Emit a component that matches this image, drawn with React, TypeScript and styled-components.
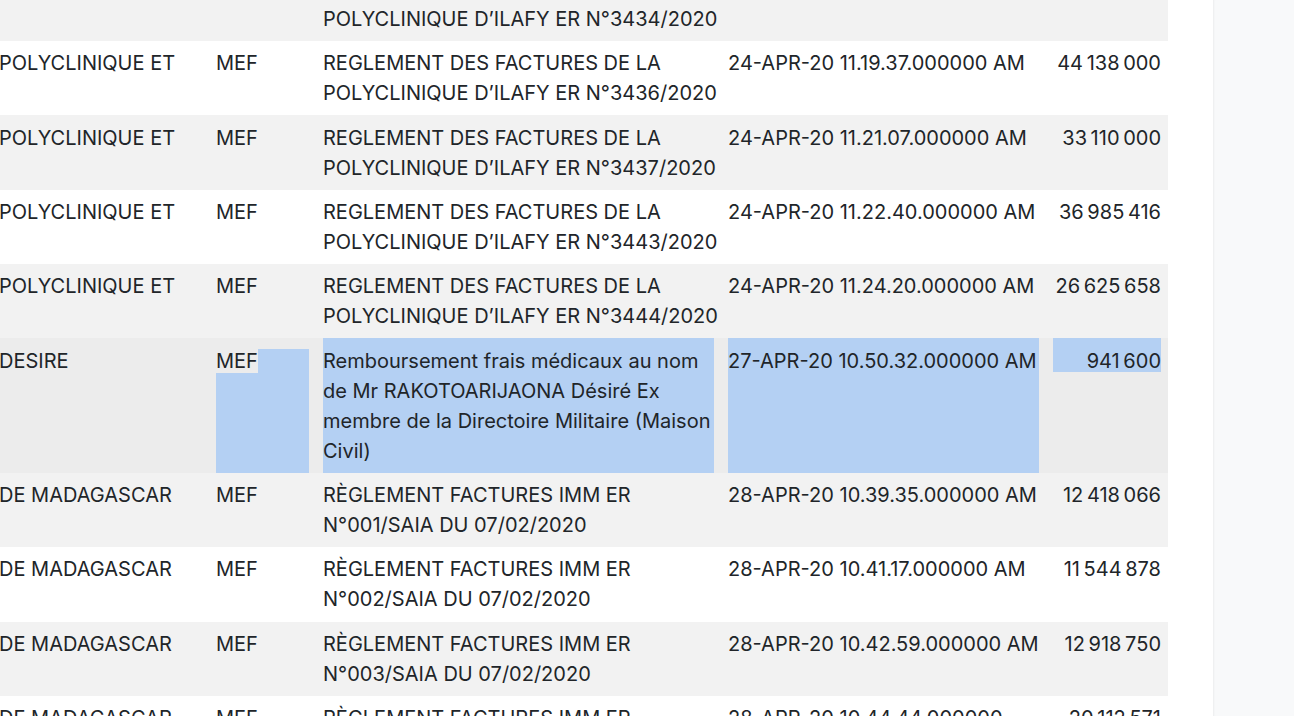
import React from 'react';
import styled, { createGlobalStyle, css } from 'styled-components';

const SEL = '#b4d0f3';

const GlobalStyle = createGlobalStyle`
  html, body { margin: 0; padding: 0; background: #fff; }
  body {
    font-family: Inter, "Noto Sans", "Liberation Sans", sans-serif;
    color: #212529;
    overflow: hidden;
  }
`;

const Page = styled.div`
  display: flex;
  height: 716px;
  overflow: hidden;
`;

const Main = styled.main`
  flex: 1;
  min-width: 0;
  overflow: hidden;
  padding-right: 45px;
`;

const Sidebar = styled.aside`
  width: 81px;
  flex-shrink: 0;
  background: #f8f9fa;
  box-shadow: inset 2px 0 2px -1px rgba(0, 0, 0, 0.05);
`;

const Table = styled.div`
  width: 1176px;
  margin: -33.4px 0 0 -8px;
  font-size: 20px;
  line-height: 30px;
`;

type Tone = 'odd' | 'even' | 'hover';

const Row = styled.div<{ $tone: Tone }>`
  display: grid;
  grid-template-columns: 217px 107px 405px 325px 122px;
  background: ${(p) => (p.$tone === 'odd' ? '#f2f2f2' : p.$tone === 'hover' ? '#ececec' : '#ffffff')};
`;

const Cell = styled.div<{ $right?: boolean }>`
  display: flex;
  flex-direction: column;
  padding: 0 7px;
  min-width: 0;
  text-align: ${(p) => (p.$right ? 'right' : 'left')};
`;

type Sel = 'none' | 'full' | 'tail' | 'head';

const Content = styled.div<{ $sel?: Sel }>`
  flex: 1;
  padding: 7.2px 0;
  ${(p) =>
    p.$sel === 'full' &&
    css`
      background: ${SEL};
    `}
  ${(p) =>
    p.$sel === 'tail' &&
    css`
      background: linear-gradient(to bottom, transparent 11px, ${SEL} 11px);
    `}
  ${(p) =>
    p.$sel === 'head' &&
    css`
      background: linear-gradient(to bottom, ${SEL} 34px, transparent 34px);
    `}
`;

const Line = styled.span`
  display: block;
  white-space: nowrap;
`;

const Clipped = styled.span`
  display: inline-block;
  margin-left: -6px;
`;

const Unselected = styled.span`
  background: #ececec;
`;

interface RowData {
  who: React.ReactNode[];
  label: string[];
  date: string[];
  amount: string;
}

const S = '\u202F';
const AccentTip = <Clipped>Í</Clipped>;

const poly = (n: string, time: string, amount: string): RowData => ({
  who: ['POLYCLINIQUE ET', AccentTip],
  label: ['REGLEMENT DES FACTURES DE LA', `POLYCLINIQUE D’ILAFY ER N°${n}/2020`],
  date: [`24-APR-20 ${time}.000000 AM`],
  amount,
});

const saia = (n: string, date: string[], amount: string): RowData => ({
  who: ['DE MADAGASCAR'],
  label: ['RÈGLEMENT FACTURES IMM ER', `N°${n}/SAIA DU 07/02/2020`],
  date,
  amount,
});

const rows: RowData[] = [
  poly('3434', '11.17.52', `44${S}138${S}000`),
  poly('3436', '11.19.37', `44${S}138${S}000`),
  poly('3437', '11.21.07', `33${S}110${S}000`),
  poly('3443', '11.22.40', `36${S}985${S}416`),
  poly('3444', '11.24.20', `26${S}625${S}658`),
  {
    who: ['DESIRE'],
    label: [
      'Remboursement frais médicaux au nom',
      'de Mr RAKOTOARIJAONA Désiré Ex',
      'membre de la Directoire Militaire (Maison',
      'Civil)',
    ],
    date: ['27-APR-20 10.50.32.000000 AM'],
    amount: `941${S}600`,
  },
  saia('001', ['28-APR-20 10.39.35.000000 AM'], `12${S}418${S}066`),
  saia('002', ['28-APR-20 10.41.17.000000 AM'], `11${S}544${S}878`),
  saia('003', ['28-APR-20 10.42.59.000000 AM'], `12${S}918${S}750`),
  saia('004', ['28-APR-20 10.44.44.000000', 'AM'], `20${S}112${S}571`),
];

const SELECTED = 5;

export default function App() {
  return (
    <>
      <GlobalStyle />
      <Page>
        <Main>
          <Table>
            {rows.map((r, i) => {
              const selected = i === SELECTED;
              const tone: Tone = selected ? 'hover' : i % 2 === 0 ? 'odd' : 'even';
              return (
                <Row key={i} $tone={tone}>
                  <Cell>
                    <Content>
                      {r.who.map((w, j) => (
                        <Line key={j}>{w}</Line>
                      ))}
                    </Content>
                  </Cell>
                  <Cell>
                    <Content $sel={selected ? 'tail' : 'none'}>
                      {selected ? <Unselected>MEF</Unselected> : 'MEF'}
                    </Content>
                  </Cell>
                  <Cell>
                    <Content $sel={selected ? 'full' : 'none'}>
                      {r.label.map((l, j) => (
                        <Line key={j}>{l}</Line>
                      ))}
                    </Content>
                  </Cell>
                  <Cell>
                    <Content $sel={selected ? 'full' : 'none'}>
                      {r.date.map((d, j) => (
                        <Line key={j}>{d}</Line>
                      ))}
                    </Content>
                  </Cell>
                  <Cell $right>
                    <Content $sel={selected ? 'head' : 'none'}>
                      <Line>{r.amount}</Line>
                    </Content>
                  </Cell>
                </Row>
              );
            })}
          </Table>
        </Main>
        <Sidebar />
      </Page>
    </>
  );
}
